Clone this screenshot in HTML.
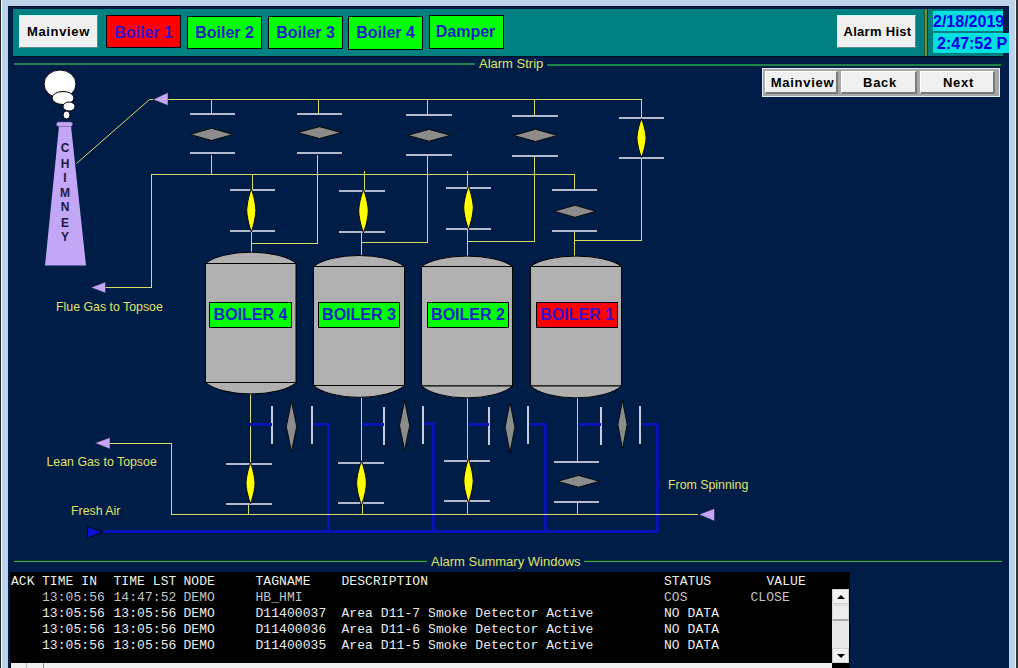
<!DOCTYPE html>
<html><head><meta charset="utf-8">
<style>
*{margin:0;padding:0;box-sizing:border-box}
html,body{width:1018px;height:668px;overflow:hidden;background:#bcd3ec;font-family:"Liberation Sans",sans-serif}
.a{position:absolute}
.btn{position:absolute;border:1px solid #000;font-weight:bold;font-size:16px;color:#1a22c8;text-align:center;line-height:31px;white-space:nowrap;overflow:hidden}
.g{background:#00ff00}
.r{background:#ff0000;color:#3a12cc}
.b3d{position:absolute;background:#f0f0f0;border-top:1px solid #c8ffff;border-left:1px solid #c8ffff;border-right:1px solid #5a8a8a;border-bottom:1px solid #5a8a8a;font-weight:bold;font-size:13px;color:#000;text-align:center;white-space:nowrap}
.nb{position:absolute;background:#f0f0f0;border-top:1px solid #fff;border-left:1px solid #fff;border-right:2px solid #7a7a7a;border-bottom:2px solid #7a7a7a;font-weight:bold;font-size:13px;color:#000;text-align:center;line-height:21px;white-space:nowrap;letter-spacing:0.7px;padding-left:3px}
.mono{font-family:"Liberation Mono",monospace;font-size:13px;white-space:pre;color:#e8e8e8;position:absolute;line-height:16px;letter-spacing:0.07px}
</style></head><body>
<!-- window frame edges -->
<div class="a" style="left:0;top:0;width:1px;height:668px;background:#222"></div>
<div class="a" style="left:1px;top:0;width:1px;height:668px;background:#fff"></div>
<div class="a" style="left:1015px;top:0;width:1px;height:668px;background:#e6f4ff"></div>
<div class="a" style="left:1016px;top:0;width:2px;height:668px;background:#333"></div>
<!-- navy panel -->
<div class="a" style="left:8px;top:6px;width:1001px;height:662px;background:#001d47;border-top:1px solid #000c20"></div>
<!-- teal header -->
<div class="a" style="left:13px;top:9px;width:990px;height:48px;background:#008080;border-bottom:1px solid #001020"></div>
<div class="a" style="left:924px;top:9px;width:4px;height:47px;background:#6a9050;border-left:1px solid #2a5a22;border-right:1px solid #0e4a10"></div>

<div class="b3d" style="left:19px;top:15px;width:79px;height:33px;line-height:32px;letter-spacing:0.65px">Mainview</div>
<div class="btn r" style="left:106px;top:15px;width:75px;height:33px;line-height:33px">Boiler 1</div>
<div class="btn g" style="left:187px;top:16px;width:75px;height:33px">Boiler 2</div>
<div class="btn g" style="left:268px;top:16px;width:75px;height:33px">Boiler 3</div>
<div class="btn g" style="left:348px;top:16px;width:75px;height:34px">Boiler 4</div>
<div class="btn g" style="left:429px;top:15px;width:75px;height:34px;line-height:31px;padding-right:2px">Damper</div>
<div class="b3d" style="left:837px;top:15px;width:79px;height:33px;line-height:32px;letter-spacing:0.3px;padding-left:2px">Alarm Hist</div>

<div class="a" style="left:933px;top:11px;width:70px;height:20px;background:#00e0e0;color:#0000e8;font-weight:bold;font-size:16px;line-height:21px;white-space:nowrap;overflow:hidden">2/18/2019</div>
<div class="a" style="left:933px;top:33px;width:76px;height:20px;background:#00e0e0;color:#0000e8;font-weight:bold;font-size:16px;line-height:22px;white-space:nowrap;overflow:hidden;padding-left:4px;letter-spacing:0px">2:47:52 P</div>

<!-- nav panel -->
<div class="a" style="left:762px;top:68px;width:238px;height:29px;background:#a8a8a8;border:1px solid #e8eef8"></div>
<div class="nb" style="left:765px;top:71px;width:73px;height:23px">Mainview</div>
<div class="nb" style="left:841px;top:71px;width:76px;height:23px">Back</div>
<div class="nb" style="left:920px;top:71px;width:75px;height:23px">Next</div>

<svg class="a" style="left:0;top:0" width="1018" height="668" viewBox="0 0 1018 668">
<g shape-rendering="crispEdges">
<!-- section lines -->
<rect x="14" y="63" width="461" height="2" fill="#227e50"/>
<rect x="547" y="64" width="454" height="2" fill="#1a8446"/>
<rect x="14" y="560" width="413" height="1" fill="#0a3a14"/>
<rect x="14" y="561" width="413" height="1" fill="#44aa5a"/>
<rect x="584" y="560" width="418" height="1" fill="#0a3a14"/>
<rect x="584" y="561" width="418" height="1" fill="#44aa5a"/>
</g>
<g font-family="Liberation Sans" font-size="13" fill="#e0e268">
<text x="479" y="68">Alarm Strip</text>
<text x="431" y="566">Alarm Summary Windows</text>
</g>
<g font-family="Liberation Sans" font-size="12.35" fill="#e0e268">
<text x="56" y="310.5">Flue Gas to Topsoe</text>
<text x="46.5" y="466">Lean Gas to Topsoe</text>
<text x="71" y="515">Fresh Air</text>
<text x="668" y="489">From Spinning</text>
</g>

<!-- smoke -->
<g fill="#fff" stroke="#000" stroke-width="1">
<ellipse cx="60" cy="84" rx="16" ry="14"/>
<ellipse cx="63" cy="98" rx="11" ry="6.5"/>
<ellipse cx="69" cy="106.5" rx="6" ry="4.5"/>
<ellipse cx="66.5" cy="115" rx="3.5" ry="4"/>
</g>
<!-- chimney -->
<polygon points="59,126 71,126 86,265.5 45,265.5" fill="#c4a6f6"/>
<rect x="56.5" y="122" width="16" height="4.5" rx="2" fill="#c4a6f6" stroke="#6a4a9a" stroke-width="0.6"/>
<g font-family="Liberation Sans" font-weight="bold" font-size="12" fill="#1a1a40" text-anchor="middle">
<text x="65" y="152">C</text><text x="65" y="167.5">H</text><text x="65" y="182">I</text><text x="65" y="196.5">M</text><text x="65" y="211">N</text><text x="65" y="226.5">E</text><text x="65" y="241">Y</text>
</g>

<!-- yellow lines -->
<g stroke="#d8dc66" stroke-width="1" fill="none" shape-rendering="crispEdges">
<polyline points="76.5,163.5 149.5,99.5 153,99.5" shape-rendering="auto"/>
<polyline points="168,99.5 641.5,99.5 641.5,118"/>
<line x1="211.5" y1="99" x2="211.5" y2="113"/>
<line x1="211.5" y1="155" x2="211.5" y2="174"/>
<line x1="318.5" y1="99" x2="318.5" y2="113"/>
<line x1="317.5" y1="155" x2="317.5" y2="244"/>
<line x1="427.5" y1="99" x2="427.5" y2="114"/>
<line x1="427.5" y1="156" x2="427.5" y2="242"/>
<line x1="534.5" y1="99" x2="534.5" y2="115"/>
<line x1="534.5" y1="157" x2="534.5" y2="241"/>
<line x1="641.5" y1="157" x2="641.5" y2="240.5"/>
<polyline points="574,174.5 151.5,174.5 151.5,287.5 105,287.5"/>
<!-- boiler 4 -->
<line x1="252.5" y1="174" x2="252.5" y2="190"/>
<line x1="251.5" y1="231" x2="251.5" y2="253"/>
<line x1="251.5" y1="243.5" x2="317.5" y2="243.5"/>
<!-- boiler 3 -->
<line x1="364.5" y1="174" x2="364.5" y2="191"/>
<line x1="361.5" y1="232" x2="361.5" y2="256"/>
<line x1="361.5" y1="242.5" x2="427.5" y2="242.5"/>
<line x1="364.5" y1="171" x2="364.5" y2="174"/>
<line x1="467.5" y1="171" x2="467.5" y2="174"/>
<!-- boiler 2 -->
<line x1="467.5" y1="174" x2="467.5" y2="256"/>
<line x1="467.5" y1="241.5" x2="534.5" y2="241.5"/>
<!-- boiler 1 -->
<line x1="574.5" y1="174" x2="574.5" y2="190"/>
<line x1="574.5" y1="231" x2="574.5" y2="256"/>
<line x1="574.5" y1="240.5" x2="641.5" y2="240.5"/>
<!-- bottom -->
<line x1="250.5" y1="394" x2="250.5" y2="463"/>
<line x1="248.5" y1="504" x2="248.5" y2="514"/>
<line x1="361.5" y1="397" x2="361.5" y2="463"/>
<line x1="362.5" y1="503" x2="362.5" y2="514"/>
<line x1="467.5" y1="398" x2="467.5" y2="460"/>
<line x1="467.5" y1="501" x2="467.5" y2="514"/>
<line x1="577.5" y1="398" x2="577.5" y2="462"/>
<line x1="577.5" y1="502" x2="577.5" y2="514"/>
</g>

<!-- arrows -->
<g fill="#c4a6f6" stroke="#1a1a3a" stroke-width="0.5">
<polygon points="153,99.5 168,92.5 168,105.5"/>
<polygon points="91,287.5 105.5,282 105.5,293"/>
<polygon points="95,443 110,437.5 110,449"/>
<polygon points="699,514.5 714.5,508.5 714.5,521"/>
</g>

<!-- gray bars (horizontal) -->
<g fill="#b2bacb" shape-rendering="crispEdges">
<rect x="190" y="113" width="45" height="2"/><rect x="190" y="152" width="45" height="2"/>
<rect x="297" y="113" width="45" height="2"/><rect x="297" y="152" width="45" height="2"/>
<rect x="406" y="114" width="46" height="2"/><rect x="406" y="154" width="46" height="2"/>
<rect x="512" y="115" width="46" height="2"/><rect x="512" y="155" width="46" height="2"/>
<rect x="619" y="117" width="45" height="2"/><rect x="619" y="157" width="45" height="2"/>
<rect x="230" y="189" width="45" height="2"/><rect x="230" y="230" width="45" height="2"/>
<rect x="339" y="190" width="46" height="2"/><rect x="339" y="231" width="46" height="2"/>
<rect x="446" y="187" width="45" height="2"/><rect x="446" y="228" width="45" height="2"/>
<rect x="552" y="189" width="45" height="2"/><rect x="552" y="230" width="45" height="2"/>
<rect x="226" y="463" width="46" height="2"/><rect x="226" y="503" width="46" height="2"/>
<rect x="338" y="462" width="46" height="2"/><rect x="338" y="502" width="46" height="2"/>
<rect x="444" y="460" width="46" height="2"/><rect x="444" y="500" width="46" height="2"/>
<rect x="554" y="461" width="45" height="2"/><rect x="554" y="501" width="45" height="2"/>
</g>
<!-- gray bars vertical -->
<g fill="#c4ccdc" shape-rendering="crispEdges">
<rect x="271" y="406" width="2" height="38"/><rect x="311" y="406" width="2" height="38"/>
<rect x="383" y="407" width="2" height="38"/><rect x="422" y="406" width="2" height="38"/>
<rect x="488" y="407" width="2" height="38"/><rect x="527" y="406" width="2" height="38"/>
<rect x="600" y="407" width="2" height="38"/><rect x="639" y="406" width="2" height="38"/>
</g>

<!-- gray diamonds horizontal -->
<g fill="#8c8c8c" stroke="#080808" stroke-width="1">
<polygon points="190.0,134.4 211.5,128.3 233.0,134.4 211.5,140.5"/>
<polygon points="297.5,132.6 319.5,126.7 341.5,132.6 319.5,138.5"/>
<polygon points="407.5,135.3 429.0,129.4 450.5,135.3 429.0,141.2"/>
<polygon points="513.5,135.4 535.5,129.3 557.5,135.4 535.5,141.5"/>
<polygon points="554.0,211.3 575.0,205.3 596.0,211.3 575.0,217.3"/>
<polygon points="557.5,481.3 578.5,475.4 599.5,481.3 578.5,487.2"/>
</g>
<!-- gray diamonds vertical -->
<g fill="#8c8c8c" stroke="#080808" stroke-width="1">
<polygon points="291.5,401.0 296.7,426.5 291.5,452.0 286.3,426.5"/>
<polygon points="404.6,400.4 409.7,425.4 404.6,450.4 399.5,425.4"/>
<polygon points="510.0,401.9 514.9,427.2 510.0,452.5 505.1,427.2"/>
<polygon points="622.5,400.2 627.2,424.5 622.5,448.8 617.8,424.5"/>
</g>
<!-- yellow diamonds -->
<g fill="#ffff00" stroke="#080808" stroke-width="1">
<polygon points="641.5,118.5 642.9,122.4 644.1,126.3 645.0,130.2 645.7,134.1 646.1,138.0 645.7,141.9 645.0,145.8 644.1,149.7 642.9,153.6 641.5,157.5 640.1,153.6 638.9,149.7 638.0,145.8 637.3,141.9 636.9,138.0 637.3,134.1 638.0,130.2 638.9,126.3 640.1,122.4"/>
<polygon points="251.3,188.6 252.7,192.9 253.9,197.3 254.8,201.6 255.5,206.0 255.9,210.3 255.5,214.6 254.8,219.0 253.9,223.3 252.7,227.7 251.3,232.0 249.9,227.7 248.7,223.3 247.8,219.0 247.1,214.6 246.7,210.3 247.1,206.0 247.8,201.6 248.7,197.3 249.9,192.9"/>
<polygon points="363.5,189.0 364.9,193.4 366.2,197.8 367.2,202.2 367.9,206.6 368.3,211.0 367.9,215.4 367.2,219.8 366.2,224.2 364.9,228.6 363.5,233.0 362.1,228.6 360.8,224.2 359.8,219.8 359.1,215.4 358.7,211.0 359.1,206.6 359.8,202.2 360.8,197.8 362.1,193.4"/>
<polygon points="468.5,185.9 469.9,190.3 471.2,194.6 472.2,199.0 472.9,203.3 473.3,207.7 472.9,212.1 472.2,216.4 471.2,220.8 469.9,225.1 468.5,229.5 467.1,225.1 465.8,220.8 464.8,216.4 464.1,212.1 463.7,207.7 464.1,203.3 464.8,199.0 465.8,194.6 467.1,190.3"/>
<polygon points="250.5,462.6 251.9,466.7 253.0,470.8 254.0,475.0 254.7,479.1 255.0,483.2 254.7,487.3 254.0,491.4 253.0,495.6 251.9,499.7 250.5,503.8 249.1,499.7 248.0,495.6 247.0,491.4 246.3,487.3 246.0,483.2 246.3,479.1 247.0,475.0 248.0,470.8 249.1,466.7"/>
<polygon points="361.5,460.8 363.0,465.3 364.2,469.7 365.3,474.2 366.0,478.6 366.4,483.1 366.0,487.6 365.3,492.0 364.2,496.5 363.0,500.9 361.5,505.4 360.0,500.9 358.8,496.5 357.7,492.0 357.0,487.6 356.6,483.1 357.0,478.6 357.7,474.2 358.8,469.7 360.0,465.3"/>
<polygon points="468.5,458.6 469.9,463.0 471.1,467.5 472.1,471.9 472.8,476.4 473.2,480.8 472.8,485.2 472.1,489.7 471.1,494.1 469.9,498.6 468.5,503.0 467.1,498.6 465.9,494.1 464.9,489.7 464.2,485.2 463.8,480.8 464.2,476.4 464.9,471.9 465.9,467.5 467.1,463.0"/>
</g>

<!-- blue lines -->
<g fill="#0a14b4" shape-rendering="crispEdges">
<rect x="250" y="423" width="22" height="3"/>
<rect x="313" y="423" width="16" height="3"/><rect x="327" y="423" width="3" height="110"/>
<rect x="362" y="423" width="22" height="3"/>
<rect x="424" y="422" width="11" height="3"/><rect x="432" y="422" width="3" height="111"/>
<rect x="468" y="423" width="21" height="3"/>
<rect x="529" y="423" width="18" height="3"/><rect x="544" y="423" width="3" height="110"/>
<rect x="578" y="423" width="23" height="3"/>
<rect x="641" y="423" width="18" height="3"/><rect x="656" y="423" width="3" height="110"/>
<rect x="103" y="530" width="556" height="3"/>
</g>
<polyline points="110,443.5 171.5,443.5 171.5,514.5 698,514.5" stroke="#d8dc66" stroke-width="1" fill="none" shape-rendering="crispEdges"/>
<polygon points="87.5,526.5 103,532 87.5,538" fill="#0a12d0" stroke="#000" stroke-width="0.8"/>

<!-- boilers -->
<g fill="#b0b0b0" stroke="#000" stroke-width="1">
<path d="M205.5,263.5 A50,19.3 0 0 1 296.5,263.5 Z"/>
<rect x="205.5" y="263.5" width="90.5" height="119"/>
<path d="M205.5,382.5 A50,19.6 0 0 0 296.5,382.5 Z"/>
<path d="M313.5,266.5 A50,18.8 0 0 1 404.5,266.5 Z"/>
<rect x="313.5" y="266.5" width="91" height="119"/>
<path d="M313.5,385.5 A50,20.3 0 0 0 404.5,385.5 Z"/>
<path d="M421.5,266.5 A50,17.8 0 0 1 512.5,266.5 Z"/>
<rect x="421.5" y="266.5" width="91" height="119.5"/>
<path d="M421.5,386 A50,20.3 0 0 0 512.5,386 Z"/>
<path d="M530.5,266.5 A50,17.8 0 0 1 621.5,266.5 Z"/>
<rect x="530.5" y="266.5" width="91" height="119.5"/>
<path d="M530.5,386 A50,20.3 0 0 0 621.5,386 Z"/>
</g>
<g shape-rendering="crispEdges" stroke="#000" stroke-width="1">
<rect x="209.5" y="302.5" width="82" height="25" fill="#00ff00"/>
<rect x="318.5" y="302.5" width="81" height="25" fill="#00ff00"/>
<rect x="427.5" y="302.5" width="81" height="25" fill="#00ff00"/>
<rect x="536.5" y="302.5" width="81" height="25" fill="#ff0000"/>
</g>
<g font-family="Liberation Sans" font-weight="bold" font-size="16" fill="#1428c8" text-anchor="middle">
<text x="250.5" y="320">BOILER 4</text>
<text x="359" y="320">BOILER 3</text>
<text x="468" y="320">BOILER 2</text>
<text x="577" y="320" fill="#3a12cc">BOILER 1</text>
</g>
</svg>

<!-- alarm table -->
<div class="a" style="left:10px;top:572px;width:840px;height:96px;background:#000"></div>
<div class="mono" style="left:11px;top:574px;color:#f0f0e8">ACK</div>
<div class="mono" style="left:42px;top:574px;color:#f0f0e8">TIME IN</div>
<div class="mono" style="left:113.5px;top:574px;color:#f0f0e8">TIME LST</div>
<div class="mono" style="left:183.5px;top:574px;color:#f0f0e8">NODE</div>
<div class="mono" style="left:255.5px;top:574px;color:#f0f0e8">TAGNAME</div>
<div class="mono" style="left:341.5px;top:574px;color:#f0f0e8">DESCRIPTION</div>
<div class="mono" style="left:664px;top:574px;color:#f0f0e8">STATUS</div>
<div class="mono" style="left:766.5px;top:574px;color:#f0f0e8">VALUE</div>
<div class="mono" style="left:42px;top:590px;color:#c4c4c4">13:05:56</div>
<div class="mono" style="left:113.5px;top:590px;color:#c4c4c4">14:47:52</div>
<div class="mono" style="left:183.5px;top:590px;color:#c4c4c4">DEMO</div>
<div class="mono" style="left:255.5px;top:590px;color:#c4c4c4">HB_HMI</div>
<div class="mono" style="left:664px;top:590px;color:#c4c4c4">COS</div>
<div class="mono" style="left:750.5px;top:590px;color:#c4c4c4">CLOSE</div>
<div class="mono" style="left:42px;top:606px;color:#ececec">13:05:56</div>
<div class="mono" style="left:113.5px;top:606px;color:#ececec">13:05:56</div>
<div class="mono" style="left:183.5px;top:606px;color:#ececec">DEMO</div>
<div class="mono" style="left:255.5px;top:606px;color:#ececec">D11400037</div>
<div class="mono" style="left:341.5px;top:606px;color:#ececec">Area D11-7 Smoke Detector Active</div>
<div class="mono" style="left:664px;top:606px;color:#ececec">NO DATA</div>
<div class="mono" style="left:42px;top:622px;color:#ececec">13:05:56</div>
<div class="mono" style="left:113.5px;top:622px;color:#ececec">13:05:56</div>
<div class="mono" style="left:183.5px;top:622px;color:#ececec">DEMO</div>
<div class="mono" style="left:255.5px;top:622px;color:#ececec">D11400036</div>
<div class="mono" style="left:341.5px;top:622px;color:#ececec">Area D11-6 Smoke Detector Active</div>
<div class="mono" style="left:664px;top:622px;color:#ececec">NO DATA</div>
<div class="mono" style="left:42px;top:638px;color:#ececec">13:05:56</div>
<div class="mono" style="left:113.5px;top:638px;color:#ececec">13:05:56</div>
<div class="mono" style="left:183.5px;top:638px;color:#ececec">DEMO</div>
<div class="mono" style="left:255.5px;top:638px;color:#ececec">D11400035</div>
<div class="mono" style="left:341.5px;top:638px;color:#ececec">Area D11-5 Smoke Detector Active</div>
<div class="mono" style="left:664px;top:638px;color:#ececec">NO DATA</div>
<!-- scrollbars -->
<div class="a" style="left:832px;top:589px;width:17px;height:74px;background:#e8e8e8"></div>
<div class="a" style="left:832px;top:589px;width:17px;height:15px;background:#f0f0f0;border:1px solid #d0d0d0"></div>
<div class="a" style="left:837px;top:595px;width:0;height:0;border-left:4px solid transparent;border-right:4px solid transparent;border-bottom:4px solid #000"></div>
<div class="a" style="left:832px;top:605px;width:17px;height:16px;background:#ececec;border:1px solid #d8d8d8;border-bottom:2px solid #a8a8a8"></div>
<div class="a" style="left:832px;top:648px;width:17px;height:15px;background:#f0f0f0;border:1px solid #d0d0d0"></div>
<div class="a" style="left:837px;top:654px;width:0;height:0;border-left:4px solid transparent;border-right:4px solid transparent;border-top:4px solid #000"></div>
<div class="a" style="left:11px;top:663px;width:821px;height:5px;background:#f0f0f0"></div>
<div class="a" style="left:26px;top:663px;width:1px;height:5px;background:#bbb"></div>
<div class="a" style="left:43px;top:663px;width:1px;height:5px;background:#888"></div>
</body></html>
